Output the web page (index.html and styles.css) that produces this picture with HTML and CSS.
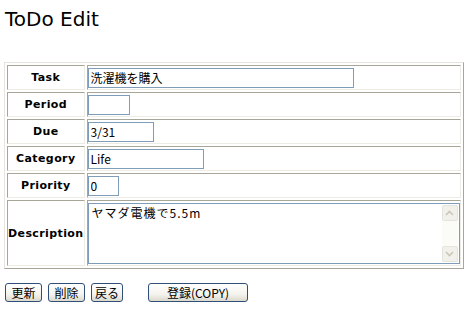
FILE: index.html
```html
<!DOCTYPE html>
<html lang="ja">
<head>
<meta charset="utf-8">
<title>ToDo Edit</title>
<link rel="stylesheet" href="styles.css">
</head>
<body>
<h1 class="title">ToDo Edit</h1>
<form class="form">
  <table class="grid">
    <tr>
      <th class="label">Task</th>
      <td class="field"><input class="inp w-task" type="text" value="洗濯機を購入"></td>
    </tr>
    <tr>
      <th class="label">Period</th>
      <td class="field"><input class="inp w-period" type="text" value=""></td>
    </tr>
    <tr>
      <th class="label">Due</th>
      <td class="field"><input class="inp w-due" type="text" value="3/31"></td>
    </tr>
    <tr>
      <th class="label">Category</th>
      <td class="field"><input class="inp w-cat" type="text" value="Life"></td>
    </tr>
    <tr>
      <th class="label">Priority</th>
      <td class="field"><input class="inp w-prio" type="text" value="0"></td>
    </tr>
    <tr class="row-desc">
      <th class="label">Description</th>
      <td class="field">
        <div class="desc">
          <textarea class="desc-text">ヤマダ電機で5.5m</textarea>
          <div class="sbar">
            <div class="sbtn"><svg width="9" height="6" viewBox="0 0 9 6"><polyline points="1,5 4.5,1.5 8,5" fill="none" stroke="#c9c7ba" stroke-width="1.6"/></svg></div>
            <div class="strack"></div>
            <div class="sbtn"><svg width="9" height="6" viewBox="0 0 9 6"><polyline points="1,1 4.5,4.5 8,1" fill="none" stroke="#c9c7ba" stroke-width="1.6"/></svg></div>
          </div>
        </div>
      </td>
    </tr>
  </table>
  <div class="actions">
    <button type="button" class="btn">更新</button>
    <button type="button" class="btn">削除</button>
    <button type="button" class="btn btn-back">戻る</button>
    <button type="button" class="btn btn-copy">登録(COPY)</button>
  </div>
</form>
</body>
</html>
```

FILE: styles.css
```css
html, body {
  margin: 0;
  padding: 0;
  background: #ffffff;
}
body {
  padding: 8px 4px 0 4px;
  font-family: "Noto Sans CJK JP", sans-serif;
  color: #000;
}
.title {
  margin: 0 0 32px 1px;
  font-family: "DejaVu Sans", sans-serif;
  font-size: 20px;
  font-weight: normal;
  line-height: 22px;
  height: 22px;
}
.grid {
  width: 459px;
  border-collapse: separate;
  border-spacing: 2px;
  border: 1px solid;
  border-color: #e6e4dc #a8a699 #a8a699 #e6e4dc;
}
.grid th, .grid td {
  box-sizing: border-box;
  height: 25px;
  padding: 0;
  border: 1px solid;
  border-color: #a8a699 #ecebe4 #ecebe4 #a8a699;
}
.label {
  width: 78px;
  font-family: "DejaVu Sans", sans-serif;
  font-size: 11px;
  font-weight: bold;
  letter-spacing: 0.4px;
  text-align: center;
  vertical-align: middle;
}
.field {
  vertical-align: middle;
}
.row-desc th, .row-desc td {
  height: 66px;
}
.inp {
  display: block;
  box-sizing: border-box;
  height: 20px;
  margin: 0;
  padding: 0 2px;
  border: 1px solid #7f9db9;
  font-family: "Noto Sans CJK JP", sans-serif;
  font-size: 12px;
  color: #000;
  background: #fff;
  outline: none;
}
.w-task { width: 266px; }
.w-period { width: 42px; }
.w-due { width: 66px; }
.w-cat { width: 116px; }
.w-prio { width: 31px; }
.desc {
  box-sizing: border-box;
  width: 372px;
  height: 61px;
  display: flex;
  border: 1px solid #7f9db9;
  padding: 1px;
  background: #fff;
}
.desc-text {
  flex: 1;
  margin: 0;
  padding: 0 2px;
  border: none;
  resize: none;
  overflow: hidden;
  font-family: "Noto Sans CJK JP", sans-serif;
  font-size: 12px;
  letter-spacing: 1px;
  line-height: 15px;
  color: #000;
  outline: none;
}
.sbar {
  width: 16px;
  display: flex;
  flex-direction: column;
  background: #fbfbf7;
}
.sbtn {
  box-sizing: border-box;
  height: 16px;
  display: flex;
  align-items: center;
  justify-content: center;
  background: #f1f0ea;
  border: 1px solid #e6e5dd;
  border-radius: 2px;
}
.strack {
  flex: 1;
}
.actions {
  display: flex;
  align-items: center;
  gap: 6px;
  margin-top: 14px;
  padding-left: 1px;
}
.btn {
  box-sizing: border-box;
  width: 37px;
  height: 19px;
  margin: 0;
  padding: 0;
  border: 1px solid #2f4f78;
  border-radius: 3px;
  background: linear-gradient(#ffffff 0%, #f4f3ee 60%, #dcd9cc 100%);
  font-family: "Noto Sans CJK JP", sans-serif;
  font-size: 12px;
  line-height: 15px;
  color: #000;
}
.btn-back {
  width: 32px;
}
.btn-copy {
  width: 100px;
  margin-left: 19px;
}
```
